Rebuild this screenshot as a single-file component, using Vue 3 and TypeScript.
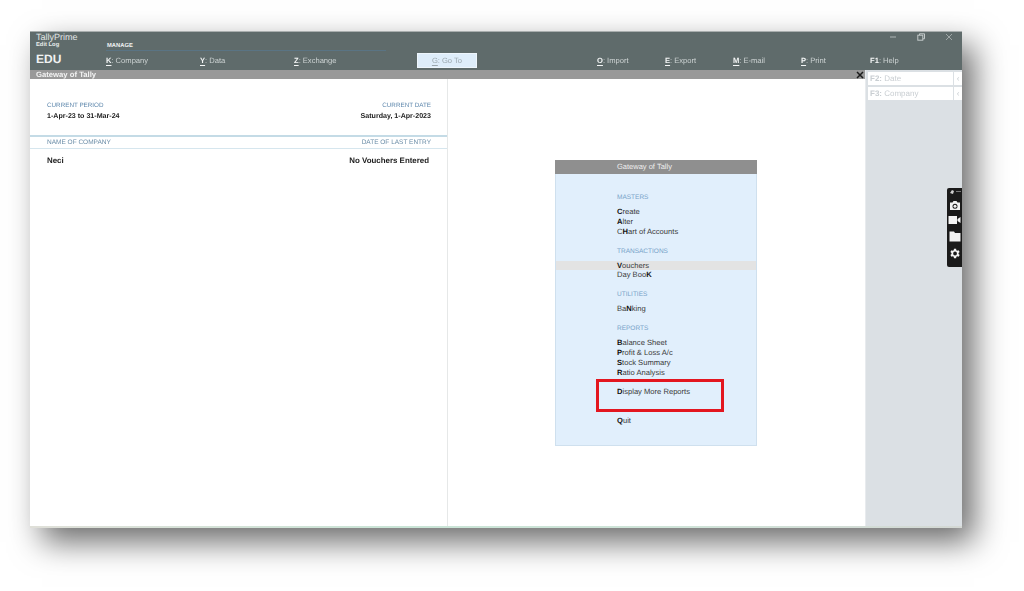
<script setup lang="ts">
interface NavItem { key: string; label: string; width: number }
interface MenuItem { pre: string; key: string; post: string; active?: boolean; gap?: number }
interface MenuGroup { title?: string; items: MenuItem[] }

const leftNav: NavItem[] = [
  { key: 'K', label: 'Company', width: 94 },
  { key: 'Y', label: 'Data', width: 94 },
  { key: 'Z', label: 'Exchange', width: 123 },
]
const rightNav: NavItem[] = [
  { key: 'O', label: 'Import', width: 68 },
  { key: 'E', label: 'Export', width: 68 },
  { key: 'M', label: 'E-mail', width: 68 },
  { key: 'P', label: 'Print', width: 69 },
  { key: 'F1', label: 'Help', width: 60 },
]
const groups: MenuGroup[] = [
  { title: 'MASTERS', items: [
    { pre: '', key: 'C', post: 'reate' },
    { pre: '', key: 'A', post: 'lter' },
    { pre: 'C', key: 'H', post: 'art of Accounts' },
  ] },
  { title: 'TRANSACTIONS', items: [
    { pre: '', key: 'V', post: 'ouchers', active: true },
    { pre: 'Day Boo', key: 'K', post: '' },
  ] },
  { title: 'UTILITIES', items: [{ pre: 'Ba', key: 'N', post: 'king' }] },
  { title: 'REPORTS', items: [
    { pre: '', key: 'B', post: 'alance Sheet' },
    { pre: '', key: 'P', post: 'rofit & Loss A/c' },
    { pre: '', key: 'S', post: 'tock Summary' },
    { pre: '', key: 'R', post: 'atio Analysis' },
    { pre: '', key: 'D', post: 'isplay More Reports', gap: 10 },
    { pre: '', key: 'Q', post: 'uit', gap: 19 },
  ] },
]
</script>

<template>
  <div class="page">
    <div class="window">
      <header class="head">
        <div class="brand">
          <div class="product">TallyPrime</div>
          <div class="editlog">Edit Log</div>
          <div class="edu">EDU</div>
        </div>
        <div class="head-main">
          <div class="head-top">
            <div class="manage"><span>MANAGE</span></div>
            <div class="controls">
              <svg width="8" height="8" viewBox="0 0 8 8"><path d="M1 4h6" stroke="#aeb6b6" stroke-width="1" /></svg>
              <svg width="8" height="8" viewBox="0 0 8 8" fill="none" stroke="#c4caca"><rect x="0.8" y="2.2" width="5" height="5" /><path d="M2.5 2V0.8h5v5H6" /></svg>
              <svg width="8" height="8" viewBox="0 0 8 8"><path d="M1 1l6 6M7 1L1 7" stroke="#a6aeae" stroke-width="0.9" /></svg>
            </div>
          </div>
          <nav class="nav">
            <div v-for="n in leftNav" :key="n.key" class="nav-item" :style="{ width: n.width + 'px' }">
              <b>{{ n.key }}</b>:<span class="nav-label">{{ n.label }}</span>
            </div>
            <div class="goto"><b>G</b>:<span class="nav-label">Go To</span></div>
            <div class="nav-spacer"></div>
            <div v-for="n in rightNav" :key="n.key" class="nav-item" :class="{ plain: n.key === 'F1' }" :style="{ width: n.width + 'px' }">
              <b>{{ n.key }}</b>:<span class="nav-label">{{ n.label }}</span>
            </div>
          </nav>
        </div>
      </header>

      <div class="main">
        <div class="content">
          <div class="gatebar">
            <span>Gateway of Tally</span>
            <svg class="close" width="8" height="8" viewBox="0 0 8 8"><path d="M1 1l6 6M7 1L1 7" stroke="#1c1c1c" stroke-width="1.5" /></svg>
          </div>
          <div class="panes">
            <section class="left">
              <div class="period">
                <div>
                  <div class="cap">CURRENT PERIOD</div>
                  <div class="val">1-Apr-23 to 31-Mar-24</div>
                </div>
                <div class="end">
                  <div class="cap">CURRENT DATE</div>
                  <div class="val">Saturday, 1-Apr-2023</div>
                </div>
              </div>
              <div class="company-head">
                <span class="cap">NAME OF COMPANY</span>
                <span class="cap">DATE OF LAST ENTRY</span>
              </div>
              <div class="company-row">
                <span>Neci</span>
                <span>No Vouchers Entered</span>
              </div>
            </section>
            <section class="right">
              <div class="menu">
                <div class="menu-title">Gateway of Tally</div>
                <div class="menu-body">
                  <div v-for="g in groups" :key="g.title" class="group">
                    <div class="group-title">{{ g.title }}</div>
                    <div
                      v-for="it in g.items"
                      :key="it.key"
                      class="menu-item"
                      :class="{ active: it.active }"
                      :style="it.gap ? { marginTop: it.gap + 'px' } : undefined"
                    >{{ it.pre }}<b>{{ it.key }}</b>{{ it.post }}</div>
                  </div>
                </div>
                <div class="redbox"></div>
              </div>
            </section>
          </div>
        </div>
        <aside class="side">
          <div class="side-btn"><span class="side-label"><b>F2:</b> Date</span><span class="chev">‹</span></div>
          <div class="side-btn"><span class="side-label"><b>F3:</b> Company</span><span class="chev">‹</span></div>
        </aside>
      </div>
      <div class="foot"></div>

      <div class="tools">
        <svg width="14" height="8" viewBox="0 0 14 8"><path d="M2 5l2-3 2 1-1 3z" fill="#cfcfcf" /><path d="M8 3.5h5" stroke="#777" stroke-width="1" /></svg>
        <svg width="12" height="11" viewBox="0 0 12 11"><path fill-rule="evenodd" fill="#f2f2f2" d="M1 2.5h2.5L4.5 1h3l1 1.500H11v7.500H1zM6 3.800a2.500 2.500 0 1 0 0 5 2.500 2.500 0 0 0 0-5z" /><circle cx="6" cy="6.300" r="1.500" fill="#f2f2f2" /></svg>
        <svg width="13" height="10" viewBox="0 0 13 10"><path fill="#f5f5f5" d="M0.500 1h8.500v8H0.500zM9.500 4l3-2v6l-3-2z" /></svg>
        <svg class="tool-folder" width="12" height="11" viewBox="0 0 12 11"><path fill="#f0f0f0" d="M0.500 0.500h4.500l1 1.500h5.500v8.500H0.500z" /></svg>
        <svg class="tool-gear" width="13" height="13" viewBox="0 0 24 24"><path fill="#f5f5f5" d="M19.400 13a7.500 7.500 0 0 0 0-2l2.100-1.600-2-3.500-2.500 1a7.500 7.500 0 0 0-1.700-1L15 3.200h-4l-.4 2.700a7.500 7.500 0 0 0-1.700 1l-2.500-1-2 3.500L6.500 11a7.500 7.500 0 0 0 0 2l-2.100 1.600 2 3.500 2.500-1a7.500 7.500 0 0 0 1.700 1l.4 2.700h4l.4-2.700a7.500 7.500 0 0 0 1.700-1l2.500 1 2-3.500zM13 15.500a3.500 3.500 0 1 1 0-7 3.500 3.500 0 0 1 0 7z" /></svg>
      </div>
    </div>
  </div>
</template>

<style scoped>
.page {
  width: 1024px;
  height: 591px;
  padding: 31px 62px 63px 30px;
  box-sizing: border-box;
  background: #fff;
  overflow: hidden;
  font-family: "Liberation Sans", Arial, sans-serif;
  text-rendering: geometricPrecision;
}
.window {
  position: relative;
  height: 497px;
  display: flex;
  flex-direction: column;
  background: #fff;
  box-shadow: 12px 14px 30px rgba(0, 0, 0, 0.58);
  filter: blur(0.4px);
}
.head {
  height: 39px;
  display: flex;
  background: #5f6b6b;
  color: #e4e8e8;
  border-top: 1px solid #a9aeae;
  box-sizing: border-box;
}
.brand {
  width: 76px;
  padding-left: 6px;
  box-sizing: border-box;
}
.product { font-size: 9px; line-height: 10px; color: #e2e6e6; }
.editlog { font-size: 5.8px; font-weight: bold; line-height: 7px; color: #e8ecec; }
.edu { font-size: 12px; font-weight: bold; line-height: 15px; margin-top: 3px; color: #f0f2f2; }
.head-main { flex: 1; display: flex; flex-direction: column; }
.head-top { height: 20px; display: flex; justify-content: space-between; }
.manage {
  width: 280px;
  height: 19px;
  box-sizing: border-box;
  border-bottom: 1px solid #5a7484;
  font-size: 5.8px;
  font-weight: bold;
  color: #f0f2f2;
  display: flex;
  align-items: flex-end;
  padding: 0 0 1px 1px;
}
.controls {
  display: flex;
  align-items: flex-start;
  padding: 1px 9px 0 0;
  gap: 20px;
}
.nav {
  flex: 1;
  display: flex;
  align-items: center;
  font-size: 7.6px;
  color: #cdd3d3;
  margin-top: -2px;
}
.nav-item { white-space: nowrap; flex: none; }
.nav-item b { color: #f4f6f6; text-decoration: underline; text-underline-offset: 2px; }
.nav-item.plain b { text-decoration: none; }
.nav-label { margin-left: 2px; }
.goto {
  width: 60px;
  height: 15px;
  flex: none;
  background: #deedfa;
  border: 1px solid #eef6fc;
  box-sizing: border-box;
  display: flex;
  align-items: center;
  justify-content: center;
  color: #9aa6ad;
}
.goto b { font-weight: normal; text-decoration: underline; text-underline-offset: 2px; }
.nav-spacer { width: 120px; flex: none; }
.main { flex: 1; display: flex; min-height: 0; }
.content { flex: 1; display: flex; flex-direction: column; min-width: 0; }
.gatebar {
  height: 9px;
  position: relative;
  background: #999;
  color: #f2f2f2;
  font-size: 7.7px;
  font-weight: bold;
  line-height: 9px;
  padding-left: 6px;
}
.close { position: absolute; right: 1px; top: 1px; }
.panes { flex: 1; display: flex; min-height: 0; }
.left {
  width: 418px;
  flex: none;
  border-right: 1px solid #e6e8e8;
  box-sizing: border-box;
  padding-top: 22px;
}
.period {
  display: flex;
  justify-content: space-between;
  padding: 0 16px 0 17px;
  height: 34px;
}
.end { text-align: right; }
.cap { font-size: 6.3px; line-height: 10px; color: #5f88ad; }
.val { font-size: 7.1px; font-weight: bold; line-height: 10.5px; color: #222; }
.company-head {
  display: flex;
  justify-content: space-between;
  padding: 0 16px 0 17px;
  height: 14px;
  align-items: center;
  border-top: 2px solid #c4dbe6;
  border-bottom: 1px solid #d6e6ee;
  box-sizing: border-box;
}
.company-head .cap { color: #6c8ea8; font-size: 6.5px; }
.company-row {
  display: flex;
  justify-content: space-between;
  padding: 0 18px 0 17px;
  margin-top: 6px;
  font-size: 7.9px;
  font-weight: bold;
  line-height: 11px;
  color: #1d1d1d;
}
.right {
  flex: 1;
  display: flex;
  align-items: center;
  justify-content: center;
  min-width: 0;
}
.menu {
  position: relative;
  width: 202px;
  margin: 1px 1px 0 0;
  background: #e1effc;
  box-shadow: inset 0 0 0 1px #cfe0ee;
  color: #3a3a3a;
}
.menu-title {
  height: 14px;
  line-height: 14px;
  background: #8f8f8f;
  color: #eeeeee;
  font-size: 7.5px;
  padding-left: 62px;
}
.menu-body { padding: 18px 1px 20px; }
.group + .group { margin-top: 9.3px; }
.group-title {
  height: 10px;
  line-height: 11.5px;
  font-size: 6.5px;
  color: #78a3c9;
  padding-left: 61px;
  margin-bottom: 5px;
}
.menu-item {
  height: 9.7px;
  line-height: 9.7px;
  font-size: 7.6px;
  padding-left: 61px;
  white-space: nowrap;
}
.menu-item b { color: #111; }
.menu-item.active { background: #e3e3e3; }
.redbox {
  position: absolute;
  left: 41px;
  top: 219px;
  width: 128px;
  height: 33px;
  box-sizing: border-box;
  border: 3.5px solid #e3161f;
}
.side {
  width: 97px;
  flex: none;
  background: #dbe0e4;
  border-left: 1px solid #e8ebee;
  box-sizing: border-box;
  padding: 2px 0 0 2px;
}
.side-btn {
  height: 13px;
  margin-bottom: 2px;
  display: flex;
  background: #fff;
  font-size: 8px;
  line-height: 13px;
  color: #c9ced2;
}
.side-label { flex: 1; padding-left: 2px; }
.chev {
  width: 8px;
  text-align: center;
  border-left: 1px solid #dbe0e4;
}
.foot {
  height: 2px;
  background: linear-gradient(90deg, #dfdfd8, #c9e4d6 40%, #cfe3d8 70%, #d4d8d4);
}
.tools {
  position: absolute;
  right: 0;
  top: 157px;
  width: 15px;
  height: 79px;
  background: #1a1a1a;
  border-radius: 2px 0 0 2px;
  display: flex;
  flex-direction: column;
  align-items: center;
  gap: 4px;
  box-sizing: border-box;
}
.tool-folder { margin-top: 2px; }
.tool-gear { margin-top: 1px; }
</style>

<style>
html, body { margin: 0; background: #fff; overflow: hidden; }
</style>
